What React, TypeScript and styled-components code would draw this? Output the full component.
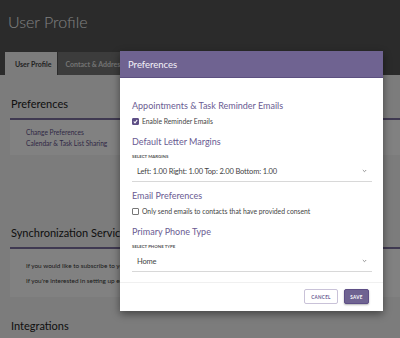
import React from 'react'
import styled, { createGlobalStyle } from 'styled-components'

const GlobalStyle = createGlobalStyle`
  html, body {
    margin: 0;
    padding: 0;
    background: #ededed;
    font-family: Lato, "Open Sans", sans-serif;
    overflow: hidden;
  }
`

const Page = styled.div`
  width: 400px;
  height: 338px;
  position: relative;
  overflow: hidden;
`

const Header = styled.header`
  background: #535353;
  height: 75px;
  display: flex;
  flex-direction: column;
  justify-content: space-between;
`

const Title = styled.h1`
  margin: 0;
  padding: 12px 0 0 8px;
  font-size: 16px;
  line-height: 20px;
  font-weight: 300;
  color: #f2f2f2;
`

const Tabs = styled.nav`
  display: flex;
  gap: 1px;
  padding-left: 5px;
`

const Tab = styled.div<{ $active?: boolean }>`
  height: 23px;
  padding: 0 ${p => (p.$active ? '6px 0 10px' : '7px 0 7px')};
  display: flex;
  align-items: center;
  font-size: 7px;
  font-weight: 700;
  white-space: nowrap;
  color: ${p => (p.$active ? '#444' : '#dcdcdc')};
  background: ${p => (p.$active ? '#ededed' : '#737373')};
`

const Content = styled.main`
  padding: 22px 0 0 10px;
`

const SectionTitle = styled.h2<{ $underline?: boolean }>`
  margin: 0;
  padding: 0 0 ${p => (p.$underline ? 7 : 0)}px 1px;
  font-size: 11px;
  line-height: 14px;
  font-weight: 400;
  color: #222;
  border-bottom: ${p => (p.$underline ? '2px solid #7a6d9c' : 'none')};
  white-space: nowrap;
`

const SectionBox = styled.div<{ $height: number; $gap: number }>`
  background: #f7f7f7;
  height: ${p => p.$height}px;
  padding: 0 16px;
  box-sizing: border-box;
  display: flex;
  flex-direction: column;
  justify-content: center;
  gap: ${p => p.$gap}px;
`

const Spacer = styled.div<{ $h: number }>`
  height: ${p => p.$h}px;
`

const LinkText = styled.a`
  font-size: 6.6px;
  line-height: 11px;
  color: #5e4f86;
  text-decoration: none;
`

const InfoText = styled.p`
  margin: 0;
  font-size: 6.4px;
  line-height: 9px;
  color: #333;
  white-space: nowrap;
`

const Backdrop = styled.div`
  position: absolute;
  inset: 0;
  background: rgba(0, 0, 0, 0.48);
`

const Modal = styled.div`
  position: absolute;
  left: 120px;
  top: 51px;
  width: 263px;
  background: #fff;
  box-shadow: 0 3px 8px rgba(0, 0, 0, 0.45);
`

const ModalHeader = styled.div`
  background: #6f6391;
  height: 27px;
  border-bottom: 1px solid #5c5080;
  box-sizing: border-box;
  display: flex;
  align-items: center;
  padding-left: 8px;
  font-size: 9.5px;
  color: #f4f2f8;
`

const ModalBody = styled.div`
  padding: 22px 11px 0 12px;
`

const Heading = styled.h3<{ $top: number }>`
  margin: ${p => p.$top}px 0 0 0;
  font-size: 9px;
  line-height: 12px;
  font-weight: 400;
  color: #6a5b92;
  white-space: nowrap;
`

const CheckRow = styled.label`
  display: flex;
  align-items: center;
  gap: 3px;
  margin-top: 4px;
  height: 10px;
  font-size: 6.8px;
  color: #444;
  white-space: nowrap;
`

const Box = styled.span<{ $checked?: boolean }>`
  width: 7px;
  height: 7px;
  border-radius: 1px;
  box-sizing: border-box;
  border: 1px solid ${p => (p.$checked ? '#5e4f86' : '#777')};
  background: ${p => (p.$checked ? '#5e4f86' : '#fff')};
  display: flex;
  align-items: center;
  justify-content: center;
`

const FieldLabel = styled.div`
  margin-top: 6px;
  font-size: 4.4px;
  line-height: 6px;
  font-weight: 700;
  color: #555;
`

const Select = styled.div`
  margin-top: 1px;
  height: 20px;
  padding: 0 5px;
  display: flex;
  align-items: center;
  justify-content: space-between;
  border-bottom: 1px solid #d8d8d8;
  font-size: 7.5px;
  letter-spacing: -0.15px;
  color: #444;
`

const Footer = styled.div`
  margin-top: 10px;
  border-top: 1px solid #f0f0f0;
  padding: 6px 14px 7px 0;
  display: flex;
  justify-content: flex-end;
  gap: 6px;
`

const Button = styled.button<{ $primary?: boolean }>`
  height: 15px;
  width: ${p => (p.$primary ? 25 : 34)}px;
  padding: 0;
  font-family: Lato, sans-serif;
  font-size: 4.6px;
  font-weight: 700;
  letter-spacing: 0.3px;
  border-radius: 2px;
  border: 1px solid ${p => (p.$primary ? '#5e4f86' : '#c9c2d8')};
  background: ${p => (p.$primary ? '#6f6391' : '#fff')};
  color: ${p => (p.$primary ? '#fff' : '#6a5b92')};
  box-shadow: ${p => (p.$primary ? '0 1px 2px rgba(0,0,0,0.3)' : 'none')};
`

const Chevron = () => (
  <svg width="5" height="4" viewBox="0 0 5 4">
    <path d="M0.8 1 L2.5 2.7 L4.2 1" fill="none" stroke="#888" strokeWidth="0.9" />
  </svg>
)

const Check = () => (
  <svg width="5" height="5" viewBox="0 0 5 5">
    <path d="M0.8 2.5 L2 3.8 L4.2 1" fill="none" stroke="#fff" strokeWidth="1.1" />
  </svg>
)

export default function App() {
  return (
    <Page>
      <GlobalStyle />
      <Header>
        <Title>User Profile</Title>
        <Tabs>
          <Tab $active>User Profile</Tab>
          <Tab>Contact &amp; Address Information</Tab>
        </Tabs>
      </Header>
      <Content>
        <SectionTitle $underline>Preferences</SectionTitle>
        <SectionBox $height={35} $gap={0}>
          <LinkText>Change Preferences</LinkText>
          <LinkText>Calendar &amp; Task List Sharing</LinkText>
        </SectionBox>
        <Spacer $h={71} />
        <SectionTitle $underline>Synchronization Services</SectionTitle>
        <SectionBox $height={48} $gap={6}>
          <InfoText>If you would like to subscribe to your calendar from another application, click here.</InfoText>
          <InfoText>If you're interested in setting up email synchronization, click here.</InfoText>
        </SectionBox>
        <Spacer $h={22} />
        <SectionTitle>Integrations</SectionTitle>
      </Content>
      <Backdrop />
      <Modal>
        <ModalHeader>Preferences</ModalHeader>
        <ModalBody>
          <Heading $top={0}>Appointments &amp; Task Reminder Emails</Heading>
          <CheckRow>
            <Box $checked><Check /></Box>
            Enable Reminder Emails
          </CheckRow>
          <Heading $top={10}>Default Letter Margins</Heading>
          <FieldLabel>SELECT MARGINS</FieldLabel>
          <Select>
            <span>Left: 1.00 Right: 1.00 Top: 2.00 Bottom: 1.00</span>
            <Chevron />
          </Select>
          <Heading $top={8}>Email Preferences</Heading>
          <CheckRow>
            <Box />
            Only send emails to contacts that have provided consent
          </CheckRow>
          <Heading $top={10}>Primary Phone Type</Heading>
          <FieldLabel>SELECT PHONE TYPE</FieldLabel>
          <Select>
            <span>Home</span>
            <Chevron />
          </Select>
        </ModalBody>
        <Footer>
          <Button>CANCEL</Button>
          <Button $primary>SAVE</Button>
        </Footer>
      </Modal>
    </Page>
  )
}
